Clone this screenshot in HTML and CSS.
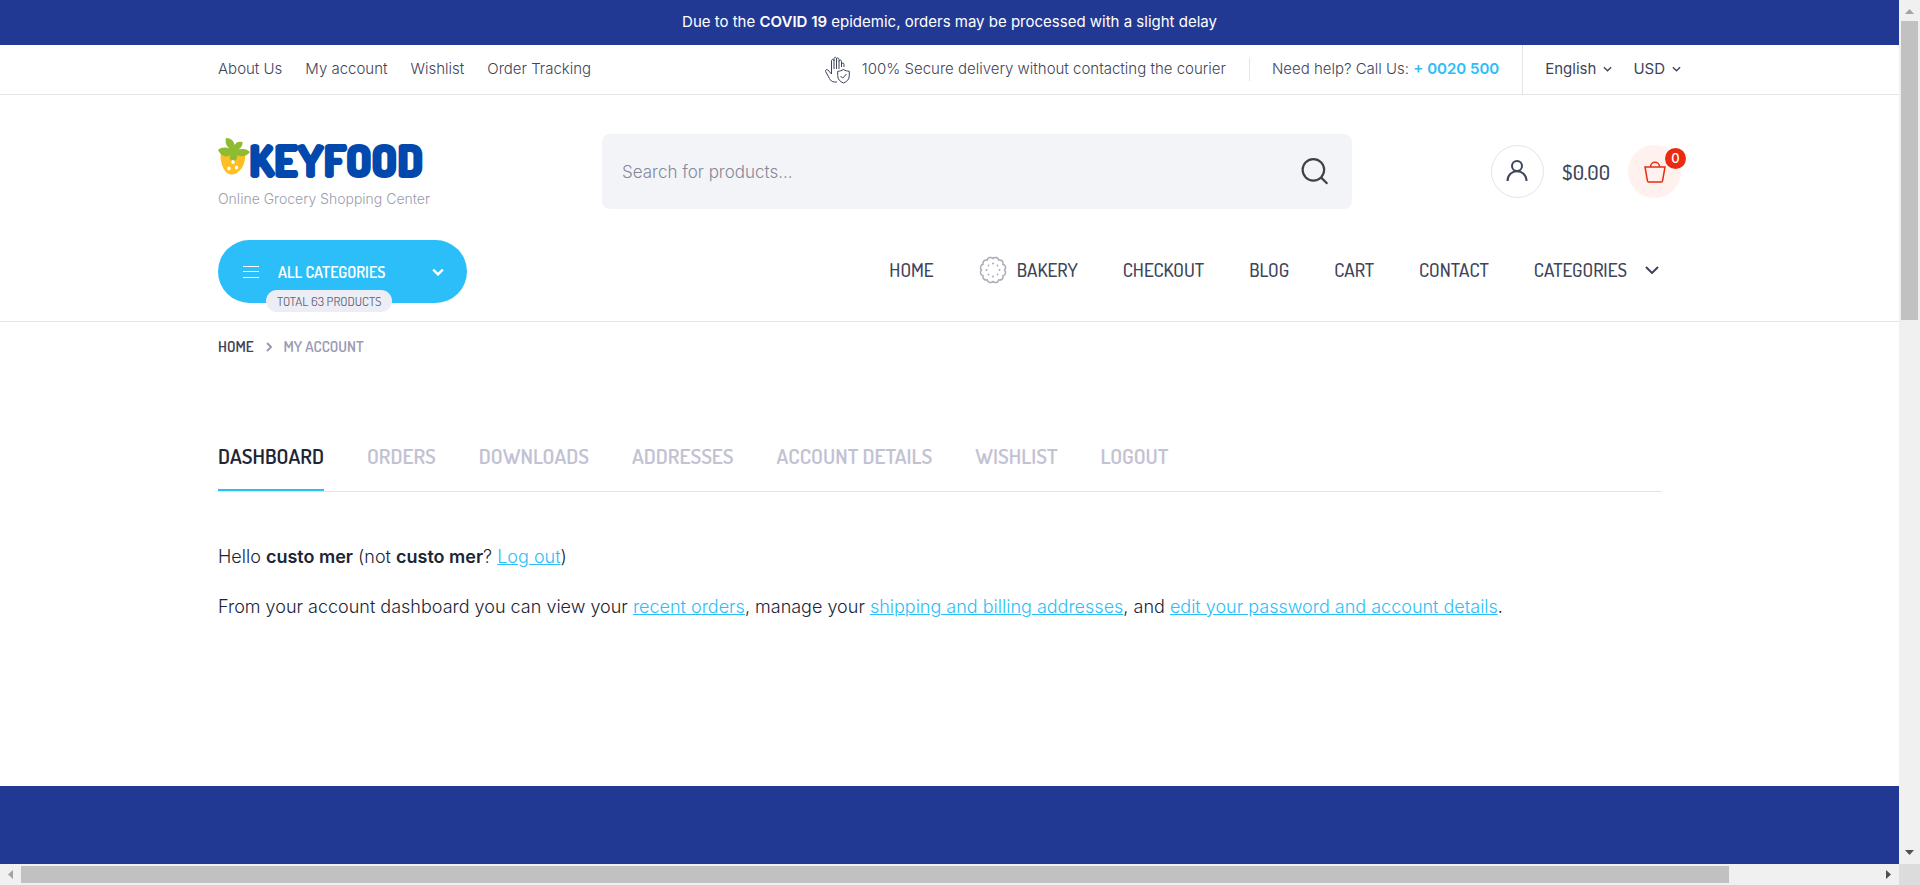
FILE: index.html
```html
<!DOCTYPE html>
<html lang="en">
<head>
<meta charset="utf-8">
<meta name="viewport" content="width=device-width, initial-scale=1">
<title>My account – Keyfood</title>
<link rel="stylesheet" href="styles.css">
</head>
<body>
<div class="frame">
  <div class="page">
    <p class="notice">Due to the <strong>COVID 19</strong> epidemic, orders may be processed with a slight delay</p>

    <header class="header">
      <div class="topbar">
        <div class="container topbar-row">
          <nav class="top-links" aria-label="Shop links">
            <a href="#">About Us</a>
            <a href="#">My account</a>
            <a href="#">Wishlist</a>
            <a href="#">Order Tracking</a>
          </nav>
          <div class="top-info">
            <p class="secure">
              <svg class="icon-hand" viewBox="0 0 26 28" aria-hidden="true">
                <path d="M13 26H10.500C8 26 6.500 24.500 5.500 22.500L1.600 15.500C1 14 2.800 13 3.900 14L7.500 18V5C7.500 2.900 10 2.900 10 5V13M10 5V3C10 .700 12.500 .700 12.500 3V13M12.500 3.500C12.500 1.500 15 1.500 15 3.500V13M15 5.500C15 3.600 17.500 3.600 17.500 5.500V11M17.500 8C18 6.500 20 6.800 20 8.500V11"/>
                <path d="M19.500 13.500C21.500 14.700 23 15.100 25.300 15.300V19.500C25.300 23.500 23 25.600 19.500 27C16 25.600 13.700 23.500 13.700 19.500V15.300C16 15.100 17.500 14.700 19.500 13.500Z"/>
                <path d="M16.500 20L18.700 22.200L22.500 18"/>
              </svg>
              <span>100% Secure delivery without contacting the courier</span>
            </p>
            <p class="help">Need help? Call Us: <strong>+ 0020 500</strong></p>
            <div class="switchers">
              <button type="button" class="switcher">English <svg class="caret" viewBox="0 0 10 6" aria-hidden="true"><path d="M1 1l4 4 4-4"/></svg></button>
              <button type="button" class="switcher">USD <svg class="caret" viewBox="0 0 10 6" aria-hidden="true"><path d="M1 1l4 4 4-4"/></svg></button>
            </div>
          </div>
        </div>
      </div>

      <div class="container main-row">
        <div class="brand">
          <a href="#" class="logo" aria-label="Keyfood">
            <svg class="logo-art" viewBox="0 0 216 44" aria-hidden="true">
              <g stroke="none">
                <path fill="#ffbf24" d="M3 15C8 10 24 10 27 15C28 22 26 31 20 35C15 39 10 38 7 34C3 28 2 21 3 15Z"/>
                <path fill="#8ebc31" d="M8 1C13 1 16 4 16.500 8C18 5 21 4 24.500 5C25 8 23 11 20 13C25 11 29 12 32 15C28 20 23 20 19 18C20 21 18 24 15 25C12 23 11 21 12 18C8 21 3 19 0 13C4 10 8 10 12 12C8 9 7 5 8 1Z"/>
                <g fill="#fff"><ellipse cx="15" cy="25" rx="1.700" ry="1.900"/><ellipse cx="11" cy="31.500" rx="1.700" ry="1.900"/><ellipse cx="18.500" cy="30.500" rx="1.700" ry="1.900"/></g>
              </g>
              <text class="logo-text" x="31" y="40">KEYFOOD</text>
            </svg>
          </a>
          <p class="tagline">Online Grocery Shopping Center</p>
        </div>
        <form class="search" role="search">
          <input type="search" class="search-input" placeholder="Search for products..." aria-label="Search for products">
          <button type="button" class="search-button" aria-label="Search">
            <svg viewBox="0 0 26 26" aria-hidden="true"><circle cx="11.500" cy="11" r="10"/><path d="M18.500 18L24.500 24"/></svg>
          </button>
        </form>
        <div class="account">
          <a href="#" class="round user" aria-label="My account">
            <svg viewBox="0 0 24 24" aria-hidden="true"><circle cx="12" cy="6" r="5"/><path d="M2.500 21C2.500 8 21.500 8 21.500 21"/></svg>
          </a>
          <span class="total">$0.00</span>
          <a href="#" class="round cart" aria-label="Cart">
            <svg viewBox="0 0 24 24" aria-hidden="true"><path d="M2 7H22L19.500 21C19.400 21.700 19 22 18.400 22H5.600C5 22 4.600 21.700 4.500 21ZM7.500 7C7.500 .800 16.500 .800 16.500 7"/></svg>
            <span class="count">0</span>
          </a>
        </div>
      </div>

      <div class="container nav-row">
        <button type="button" class="all-categories">
          <svg class="burger" viewBox="0 0 18 12" aria-hidden="true"><path d="M1 .500H17M1 5.500H17M1 11.500H17"/></svg>
          <span class="all-label">ALL CATEGORIES</span>
          <svg class="caret caret-bold" viewBox="0 0 10 6" aria-hidden="true"><path d="M1 1l4 4 4-4"/></svg>
          <span class="product-count">TOTAL 63 PRODUCTS</span>
        </button>
        <nav class="main-nav" aria-label="Main">
          <a href="#">HOME</a>
          <a href="#" class="with-icon">
            <svg class="cookie" viewBox="0 0 28 28" aria-hidden="true">
              <path d="M25.500 14A3.400 3.400 0 0 1 23.960 19.750A3.400 3.400 0 0 1 19.750 23.960A3.400 3.400 0 0 1 14 25.500A3.400 3.400 0 0 1 8.250 23.960A3.400 3.400 0 0 1 4.040 19.750A3.400 3.400 0 0 1 2.500 14A3.400 3.400 0 0 1 4.040 8.250A3.400 3.400 0 0 1 8.250 4.040A3.400 3.400 0 0 1 14 2.500A3.400 3.400 0 0 1 19.750 4.040A3.400 3.400 0 0 1 23.960 8.250A3.400 3.400 0 0 1 25.500 14Z"/>
              <g class="dots"><circle cx="14" cy="7.500" r="1"/><circle cx="14" cy="20.500" r="1"/><circle cx="7.500" cy="14" r="1"/><circle cx="20.500" cy="14" r="1"/><circle cx="9.500" cy="9.500" r=".9"/><circle cx="18.500" cy="9.500" r=".9"/><circle cx="9.500" cy="18.500" r=".9"/><circle cx="18.500" cy="18.500" r=".9"/></g>
            </svg>
            BAKERY</a>
          <a href="#">CHECKOUT</a>
          <a href="#">BLOG</a>
          <a href="#">CART</a>
          <a href="#">CONTACT</a>
          <a href="#" class="has-menu">CATEGORIES <svg class="nav-caret" viewBox="0 0 14 8" aria-hidden="true"><path d="M1 1l6 6 6-6"/></svg></a>
        </nav>
      </div>
    </header>

    <main class="container content">
      <nav class="breadcrumb" aria-label="Breadcrumb">
        <a href="#">HOME</a>
        <svg class="crumb-arrow" viewBox="0 0 6 10" aria-hidden="true"><path d="M1 1l4 4-4 4"/></svg>
        <span>MY ACCOUNT</span>
      </nav>
      <section class="account-page">
        <nav class="tabs" aria-label="Account pages">
          <a href="#" class="tab active" aria-current="page">DASHBOARD</a>
          <a href="#" class="tab">ORDERS</a>
          <a href="#" class="tab">DOWNLOADS</a>
          <a href="#" class="tab">ADDRESSES</a>
          <a href="#" class="tab">ACCOUNT DETAILS</a>
          <a href="#" class="tab">WISHLIST</a>
          <a href="#" class="tab">LOGOUT</a>
        </nav>
        <div class="welcome">
          <p>Hello <strong>custo mer</strong> (not <strong>custo mer</strong>? <a href="#">Log out</a>)</p>
          <p>From your account dashboard you can view your <a href="#">recent orders</a>, manage your <a href="#">shipping and billing addresses</a>, and <a href="#">edit your password and account details</a>.</p>
        </div>
      </section>
    </main>
    <footer class="footer"></footer>
  </div>

  <div class="bar bar-y" aria-hidden="true">
    <svg class="bar-arrow faint" viewBox="0 0 21 21"><path d="M6 14h9l-4.500-5z"/></svg>
    <div class="track"><div class="thumb"></div></div>
    <svg class="bar-arrow" viewBox="0 0 21 21"><path d="M6 7h9l-4.500 5z"/></svg>
  </div>
  <div class="bar bar-x" aria-hidden="true">
    <svg class="bar-arrow faint" viewBox="0 0 21 21"><path d="M13 6v9l-5-4.500z"/></svg>
    <div class="track"><div class="thumb"></div></div>
    <svg class="bar-arrow" viewBox="0 0 21 21"><path d="M8 6v9l5-4.500z"/></svg>
  </div>
  <div class="corner"></div>
</div>
</body>
</html>
```
FILE: styles.css
```css
*, *::before, *::after { box-sizing: border-box; }

:root {
  --blue: #223994;
  --sky: #2bbef9;
  --ink: #3e445a;
  --dark: #202435;
  --muted: #9b9bb4;
  --line: #e3e4e6;
  --condensed: Dosis, "Liberation Sans Narrow", "Arial Narrow", sans-serif;
}

body {
  margin: 0;
  font-family: Inter, "Liberation Sans", sans-serif;
  font-size: 15px;
  color: var(--ink);
  background: #fff;
}

p { margin: 0; }
a { color: inherit; text-decoration: none; }
button { font: inherit; color: inherit; border: 0; padding: 0; background: none; cursor: pointer; }
svg { display: block; fill: none; stroke: currentColor; flex: none; }

.frame {
  display: grid;
  grid-template-columns: minmax(0, 1fr) 21px;
  grid-template-rows: minmax(0, 1fr) 21px;
  height: 100vh;
}
.page { display: flex; flex-direction: column; overflow: hidden; }
.container { width: 100%; max-width: 1463px; margin: 0 auto; }

.notice {
  background: var(--blue);
  color: #fff;
  text-align: center;
  font-size: 15px;
  line-height: 44px;
  padding-bottom: 1px;
}
.notice strong { font-weight: 600; }

.header { border-bottom: 1px solid var(--line); }
.topbar { border-bottom: 1px solid var(--line); }
.topbar-row { display: flex; justify-content: space-between; height: 49px; line-height: 48px; font-weight: 300; }
.top-links { display: flex; gap: 23px; }
.top-info { display: flex; }
.secure { display: flex; gap: 12px; padding-right: 23px; }
.icon-hand { align-self: center; width: 26px; height: 28px; stroke-width: 1; }
.help { position: relative; padding: 0 23px; }
.help::before { content: ""; position: absolute; left: 0; top: 13px; height: 23px; border-left: 1px solid var(--line); }
.help strong { color: var(--sky); font-weight: 600; }
.switchers { display: flex; gap: 21px; border-left: 1px solid var(--line); padding-left: 22px; }
.switcher { display: flex; align-items: center; gap: 7px; height: 48px; line-height: 48px; font-weight: 400; }
.caret { width: 9px; height: 6px; stroke-width: 1.5; }
.caret-bold { width: 12px; height: 8px; stroke-width: 2; }

.main-row {
  display: grid;
  grid-template-columns: 384px minmax(0, 750px) 1fr;
  align-items: center;
  padding: 39px 0 31px;
}
.brand { padding-top: 3px; }
.logo, .logo-art { display: block; width: 216px; height: 44px; overflow: visible; }
.logo-text {
  font-family: Dosis, "Liberation Sans Narrow", sans-serif;
  font-size: 44px;
  font-weight: 800;
  fill: #0248ad;
  stroke: #0248ad;
  stroke-width: 2;
  stroke-linejoin: round;
}
.tagline { margin-top: 8px; font-size: 14px; font-weight: 300; line-height: 20px; color: #9a9cae; }

.search {
  display: flex;
  align-items: center;
  height: 75px;
  padding: 0 23px 0 20px;
  background: #f3f4f7;
  border-radius: 8px;
}
.search-input {
  flex: 1;
  min-width: 0;
  border: 0;
  padding: 0;
  background: none;
  outline: 0;
  font: 300 17px/24px Inter, "Liberation Sans", sans-serif;
  color: var(--ink);
}
.search-input::placeholder { color: #85879a; opacity: 1; }
.search-button svg { width: 28px; height: 28px; color: #3f4045; stroke-width: 2; }

.account { display: flex; align-items: center; justify-content: flex-end; gap: 18px; }
.round {
  position: relative;
  display: grid;
  place-items: center;
  width: 53px;
  height: 53px;
  border-radius: 50%;
}
.round svg { width: 24px; height: 24px; }
.user { border: 1px solid #e2e4ec; color: var(--ink); }
.user svg { stroke-width: 2; }
.cart { background: #fff1ee; color: #ea2b0f; }
.cart svg { stroke-width: 1.5; }
.total { font-family: var(--condensed); font-size: 21px; font-weight: 500; }
.count {
  position: absolute;
  right: -5px;
  top: 3px;
  width: 21px;
  height: 21px;
  border-radius: 50%;
  background: #ea2b0f;
  color: #fff;
  font: 500 13px/20px Inter, sans-serif;
  text-align: center;
}

.nav-row { display: flex; justify-content: space-between; align-items: center; padding-bottom: 18px; }
.all-categories {
  position: relative;
  display: flex;
  align-items: center;
  width: 249px;
  height: 63px;
  padding: 0 23px 0 24px;
  border-radius: 32px;
  background: var(--sky);
  color: #fff;
  font-family: var(--condensed);
  font-size: 16px;
  font-weight: 600;
}
.burger { width: 18px; height: 12px; stroke-width: 1; }
.all-label { flex: 1; text-align: left; padding-left: 18px; }
.product-count {
  position: absolute;
  left: 48px;
  bottom: -9px;
  height: 22px;
  padding: 0 11px;
  border-radius: 11px;
  background: #edeef5;
  color: #5f657c;
  font-size: 13px;
  font-weight: 400;
  line-height: 22px;
}
.main-nav {
  display: flex;
  align-items: center;
  gap: 45px;
  padding: 0 22px 4px 0;
  font-family: var(--condensed);
  font-size: 19px;
  font-weight: 500;
}
.with-icon { display: flex; align-items: center; gap: 10px; }
.has-menu { display: flex; align-items: center; gap: 18px; }
.cookie { width: 28px; height: 28px; color: #a9abb8; stroke-width: 1.5; }
.dots { fill: currentColor; stroke: none; }
.nav-caret { width: 14px; height: 8px; stroke-width: 2; }

.breadcrumb {
  display: flex;
  align-items: center;
  gap: 12px;
  padding-top: 15px;
  font-family: var(--condensed);
  font-size: 15px;
  font-weight: 600;
  line-height: 20px;
  color: var(--muted);
}
.breadcrumb a { color: var(--ink); }
.crumb-arrow { width: 6px; height: 10px; stroke-width: 2; }

.account-page { padding: 77px 19px 164px 0; }
.tabs { display: flex; gap: 43px; border-bottom: 1px solid #e2e4ec; }
.tab {
  padding: 9px 0 20px;
  border-bottom: 2px solid transparent;
  font-family: var(--condensed);
  font-size: 21px;
  font-weight: 600;
  line-height: 26px;
  color: #c2c2d3;
}
.tab.active { color: var(--dark); border-color: var(--sky); }
.welcome {
  display: grid;
  gap: 20px;
  padding-top: 50px;
  font-size: 18px;
  font-weight: 300;
  line-height: 30px;
  color: var(--dark);
}
.welcome a { color: var(--sky); text-decoration: underline; }
.welcome strong { font-weight: 600; }
.footer { flex: 1; background: var(--blue); }

.bar { display: flex; background: #f0f0f0; }
.bar-y { flex-direction: column; }
.bar-arrow { width: 21px; height: 21px; fill: #505050; stroke: none; }
.bar-arrow.faint { fill: #a3a3a3; }
.track { flex: 1; }
.thumb { background: #c1c1c1; }
.bar-y .thumb { height: 36.4%; margin: 0 2px; }
.bar-x .track { padding: 2px 0; }
.bar-x .thumb { width: 92%; height: 100%; }
.corner { background: #dcdcdc; }
```
